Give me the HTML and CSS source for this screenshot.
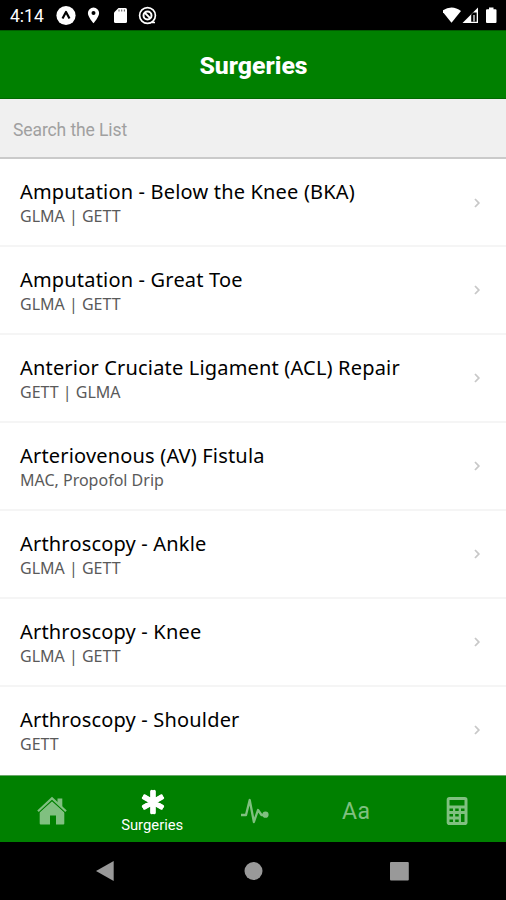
FILE: index.html
```html
<!DOCTYPE html>
<html lang="en">
<head>
<meta charset="utf-8">
<title>Surgeries</title>
<link rel="stylesheet" href="styles.css">
</head>
<body>
<div class="screen">
  <div class="status">
    <span class="time">4:14</span>
    <svg class="status-left" width="110" height="30" viewBox="0 0 110 30">
      <circle cx="16" cy="15.500" r="9.600" fill="#fff"/>
      <path d="M12.500 18.500L16 12l3.500 6.500" fill="none" stroke="#000" stroke-width="2.200" stroke-linejoin="round"/>
      <path d="M43.500 7.500a5.600 5.600 0 0 0-5.600 5.600c0 4.200 5.600 10.200 5.600 10.200s5.600-6 5.600-10.200a5.600 5.600 0 0 0-5.600-5.600z" fill="#fff"/>
      <circle cx="43.500" cy="13" r="2" fill="#000"/>
      <path d="M68.500 8h7q1.500 0 1.500 1.500v12q0 1.500-1.500 1.500h-10q-1.500 0-1.500-1.500v-9z" fill="#fff"/>
      <path d="M69 9.500v2M71.700 9.500v2M74.400 9.500v2" stroke="#666" stroke-width="1.100"/>
      <circle cx="97.500" cy="15.500" r="7.900" fill="none" stroke="#fff" stroke-width="1.700"/>
      <circle cx="97.500" cy="15.500" r="4" fill="none" stroke="#fff" stroke-width="2"/>
      <path d="M94.500 12.500l6 6" stroke="#fff" stroke-width="1.800"/>
      <path d="M102 22.500h3" stroke="#fff" stroke-width="1.500"/>
    </svg>
    <svg class="status-right" width="62" height="30" viewBox="0 0 62 30">
      <path d="M-1 11q4.500-3.600 9.500-3.600t9.500 3.600l-9.500 11.800z" fill="#fff"/>
      <path d="M35 7.500V23H19.500z" fill="#fff"/>
      <path d="M28.200 21.700V14.500l2-2h3.500v9.200z" fill="#000"/>
      <path d="M31 15v6.500" stroke="#fff" stroke-width="1.200"/>
      <path d="M46 7.500h4.500v1.700h2q1 0 1 1V22q0 1-1 1h-8.500q-1 0-1-1V10.200q0-1 1-1h2z" fill="#fff"/>
    </svg>
  </div>
  <header class="header"><h1>Surgeries</h1></header>
  <div class="search">Search the List</div>
  <main class="list">
    <div class="row"><div><div class="title">Amputation - Below the Knee (BKA)</div><div class="sub">GLMA | GETT</div></div><svg class="chev" width="8" height="12" viewBox="0 0 8 12"><path d="M2 2l3.800 4L2 10"/></svg></div>
    <div class="row"><div><div class="title">Amputation - Great Toe</div><div class="sub">GLMA | GETT</div></div><svg class="chev" width="8" height="12" viewBox="0 0 8 12"><path d="M2 2l3.800 4L2 10"/></svg></div>
    <div class="row"><div><div class="title">Anterior Cruciate Ligament (ACL) Repair</div><div class="sub">GETT | GLMA</div></div><svg class="chev" width="8" height="12" viewBox="0 0 8 12"><path d="M2 2l3.800 4L2 10"/></svg></div>
    <div class="row"><div><div class="title">Arteriovenous (AV) Fistula</div><div class="sub">MAC, Propofol Drip</div></div><svg class="chev" width="8" height="12" viewBox="0 0 8 12"><path d="M2 2l3.800 4L2 10"/></svg></div>
    <div class="row"><div><div class="title">Arthroscopy - Ankle</div><div class="sub">GLMA | GETT</div></div><svg class="chev" width="8" height="12" viewBox="0 0 8 12"><path d="M2 2l3.800 4L2 10"/></svg></div>
    <div class="row"><div><div class="title">Arthroscopy - Knee</div><div class="sub">GLMA | GETT</div></div><svg class="chev" width="8" height="12" viewBox="0 0 8 12"><path d="M2 2l3.800 4L2 10"/></svg></div>
    <div class="row"><div><div class="title">Arthroscopy - Shoulder</div><div class="sub">GETT</div></div><svg class="chev" width="8" height="12" viewBox="0 0 8 12"><path d="M2 2l3.800 4L2 10"/></svg></div>
  </main>
  <nav class="tabs">
    <div class="tab">
      <svg width="32" height="32" viewBox="0 0 32 32">
        <path d="M16 6L28.300 17v11.500q0 1-1 1H20V20.500h-6v9H4.700q-1 0-1-1V17z" fill="#80c080"/>
        <path d="M21.500 3.500h4.800v9l-4.800-4.500z" fill="#80c080"/>
        <path d="M2 18L16 5.300l14 12.700" fill="none" stroke="#008000" stroke-width="1.500"/>
        <path d="M2 16.300L16 3.300l14 13" fill="none" stroke="#80c080" stroke-width="2.200"/>
      </svg>
    </div>
    <div class="tab active">
      <svg width="32" height="28" viewBox="0 0 32 28">
        <path d="M16 3v22M6.500 8.500l19 11M25.500 8.500l-19 11" stroke="#fff" stroke-width="4.500"/>
        <path d="M14.700 2.500v23M17.300 2.500v23M6.900 7.500l19.400 11.200M5.700 9.500l19.400 11.200M25.100 7.500L5.700 18.700M26.300 9.500L6.900 20.700" stroke="#fff" stroke-width="3.400" stroke-linecap="round" transform="translate(1.100 .95) scale(.93)"/>
      </svg>
      <span>Surgeries</span>
    </div>
    <div class="tab">
      <svg width="32" height="32" viewBox="0 0 32 32">
        <path d="M3 20h5L11.700 5l4.200 22L20 15l3.500 5H27" fill="none" stroke="#80c080" stroke-width="2.300" stroke-linejoin="round"/>
        <circle cx="27.500" cy="19.700" r="3.100" fill="#80c080"/>
      </svg>
    </div>
    <div class="tab letters">Aa</div>
    <div class="tab">
      <svg width="32" height="32" viewBox="-1 0 32 32">
        <rect x="5.700" y="2" width="20.800" height="28" rx="2.800" fill="#80c080"/>
        <path fill="#008000" d="M8.500 5h15v5.500h-15zM8.500 13.500h3.500v2.500h-3.500zM14.200 13.500h3.500v2.500h-3.500zM20 13.500h3.500v2.500H20zM8.500 19h3.500v2.500h-3.500zM14.200 19h3.500v2.500h-3.500zM20 19h3.500v8H20zM8.500 24.500h3.500V27h-3.500zM14.200 24.500h3.500V27h-3.500z"/>
      </svg>
    </div>
  </nav>
  <footer class="system">
    <svg width="20" height="22" viewBox="0 0 20 22"><path d="M0 11L17.700 1v20z" fill="#999"/></svg>
    <svg width="20" height="22" viewBox="0 0 20 22"><circle cx="10.500" cy="11" r="9" fill="#999"/></svg>
    <svg width="20" height="22" viewBox="0 0 20 22"><rect x="0" y="2" width="18.800" height="18.500" rx="1" fill="#999"/></svg>
  </footer>
</div>
</body>
</html>
```
FILE: styles.css
```css
body {
  margin: 0;
  background: #fff;
  font-family: Roboto, sans-serif;
}
.screen {
  width: 506px;
  height: 900px;
  display: flex;
  flex-direction: column;
  overflow: hidden;
}
.status {
  height: 30px;
  background: #000;
  display: flex;
  align-items: center;
  flex-shrink: 0;
}
.time {
  width: 40px;
  padding-left: 10px;
  color: #fff;
  font-size: 17.500px;
  line-height: 30px;
  padding-top: 2px;
}
.status-right {
  margin-left: auto;
  margin-right: 1px;
}
.header {
  height: 69px;
  box-sizing: border-box;
  border-top: 1px solid #005c00;
  border-bottom: 1px solid #006800;
  background: #008000;
  display: flex;
  align-items: center;
  justify-content: center;
  flex-shrink: 0;
}
.header h1 {
  margin: 3px 0 0 1px;
  color: #fff;
  font-size: 24.800px;
  font-weight: 800;
  line-height: 30px;
}
.search {
  height: 60px;
  box-sizing: border-box;
  padding-left: 13px;
  background: #f0f0f0;
  border-bottom: 2px solid #cacaca;
  color: #a0a0a0;
  font-size: 17.500px;
  letter-spacing: -0.100px;
  line-height: 62px;
  flex-shrink: 0;
}
.list {
  height: 616px;
  display: grid;
  grid-template-rows: repeat(7, 87.930px);
  flex-shrink: 0;
}
.row {
  box-sizing: border-box;
  border-bottom: 2px solid #f5f5f5;
  padding: 20px 25px 0 20px;
  display: flex;
  justify-content: space-between;
  font-family: "Noto Sans", sans-serif;
}
.row:last-child {
  border-bottom-color: #fff;
}
.title {
  color: #000;
  font-size: 20px;
  font-weight: 400;
  letter-spacing: 0.180px;
  line-height: 26px;
}
.sub {
  color: #5a5a5a;
  font-size: 16px;
  line-height: 22px;
}
.chev {
  margin-top: 17.500px;
}
.chev path {
  fill: none;
  stroke: #c8c8c8;
  stroke-width: 1.800;
}
.tabs {
  height: 67px;
  box-sizing: border-box;
  border-top: 1px solid #6aa86a;
  background: #008000;
  display: grid;
  grid-template-columns: repeat(5, 1fr);
  padding-left: 2px;
  flex-shrink: 0;
}
.tab {
  display: flex;
  flex-direction: column;
  align-items: center;
  justify-content: center;
  padding-top: 4px;
}
.active {
  justify-content: flex-start;
  padding-top: 12px;
  color: #fff;
  font-size: 14.800px;
  line-height: 18px;
}
.active span {
  margin-right: 2px;
}
.letters {
  color: #80c080;
  font-size: 23px;
  font-weight: 400;
  letter-spacing: 0.500px;
  padding-left: 3px;
}
.system {
  flex: 1;
  background: #000;
  display: flex;
  align-items: center;
  justify-content: center;
  gap: 127px;
}
```
